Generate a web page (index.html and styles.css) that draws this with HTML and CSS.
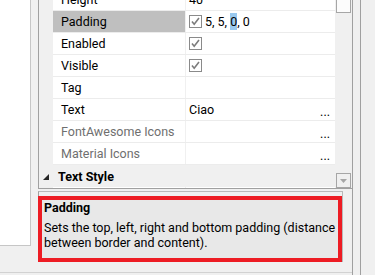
FILE: index.html
```html
<!DOCTYPE html>
<html lang="en">
<head>
    <meta charset="UTF-8">
    <title>Properties - Padding</title>
    <link rel="stylesheet" href="styles.css">
</head>
<body>
    <div class="main">
        <div class="content">
            <div class="side-panel"></div>
            <div class="props">
                <div class="grid">
                    <div class="margin-col"></div>
                    <div class="rows">
                        <div class="row"><div class="name">Height</div><div class="value">40</div></div>
                        <div class="row selected"><div class="name">Padding</div><div class="value"><svg class="check" width="13" height="13" viewBox="0 0 13 13"><rect x="0.5" y="0.5" width="12" height="12" fill="#fff" stroke="#8a8a8a"/><path d="M3 6.5 L5.2 9.2 L10 3" fill="none" stroke="#7c7c7c" stroke-width="1.6"/></svg><span>5, 5, <span class="hl">0</span>, 0</span></div></div>
                        <div class="row"><div class="name">Enabled</div><div class="value"><svg class="check" width="13" height="13" viewBox="0 0 13 13"><rect x="0.5" y="0.5" width="12" height="12" fill="#fff" stroke="#8a8a8a"/><path d="M3 6.5 L5.2 9.2 L10 3" fill="none" stroke="#7c7c7c" stroke-width="1.6"/></svg></div></div>
                        <div class="row"><div class="name">Visible</div><div class="value"><svg class="check" width="13" height="13" viewBox="0 0 13 13"><rect x="0.5" y="0.5" width="12" height="12" fill="#fff" stroke="#8a8a8a"/><path d="M3 6.5 L5.2 9.2 L10 3" fill="none" stroke="#7c7c7c" stroke-width="1.6"/></svg></div></div>
                        <div class="row"><div class="name">Tag</div><div class="value"></div></div>
                        <div class="row"><div class="name">Text</div><div class="value">Ciao<span class="dots">...</span></div></div>
                        <div class="row"><div class="name muted">FontAwesome Icons</div><div class="value"><span class="dots">...</span></div></div>
                        <div class="row"><div class="name muted">Material Icons</div><div class="value"><span class="dots">...</span></div></div>
                        <div class="category">
                            <svg class="expander" width="6" height="6" viewBox="0 0 6 6"><polygon points="6,0 6,6 0,6" fill="#262626"/></svg>
                            <span>Text Style</span>
                        </div>
                        <div class="row"><div class="name"></div><div class="value"></div></div>
                    </div>
                    <div class="scrollbar">
                        <div class="thumb"></div>
                        <div class="track"></div>
                        <div class="arrow-btn"><svg width="7" height="4" viewBox="0 0 7 4"><polygon points="0,0 7,0 3.5,4" fill="#a6a6a6"/></svg></div>
                    </div>
                </div>
                <div class="desc">
                    <div class="desc-box">
                        <div class="desc-title">Padding</div>
                        <p class="desc-text">Sets the top, left, right and bottom padding (distance between border and content).</p>
                    </div>
                </div>
            </div>
        </div>
        <div class="bottom-bar"></div>
    </div>
    <div class="edge"></div>
</body>
</html>
```

FILE: styles.css
```css
body {
    margin: 0;
    width: 375px;
    height: 275px;
    overflow: hidden;
    display: flex;
    background: #f0f0f0;
    font-family: Roboto, "Open Sans", sans-serif;
    font-size: 12.5px;
    color: #000;
}
.main {
    width: 352px;
    display: flex;
    flex-direction: column;
}
.content {
    height: 272px;
    display: flex;
    gap: 7px;
}
.side-panel {
    width: 30px;
    height: 245px;
    background: #fff;
    border-right: 1px solid #c6c6c6;
    border-bottom: 1px solid #c6c6c6;
}
.props {
    width: 314px;
    display: flex;
    flex-direction: column;
}
.grid {
    height: 188px;
    display: flex;
    border-left: 1px solid #a0a0a0;
    border-bottom: 1px solid #a0a0a0;
    overflow: hidden;
}
.margin-col {
    width: 14px;
    background: #f0f0f0;
}
.rows {
    width: 282px;
    margin-top: -11px;
    background: #fff;
}
.row {
    height: 21px;
    display: flex;
    border-bottom: 1px solid #ececec;
    line-height: 21px;
}
.name {
    width: 124px;
    padding-left: 8px;
    border-right: 1px solid #f0f0f0;
    white-space: nowrap;
}
.row.selected .name {
    background: #bfbfbf;
}
.name.muted {
    color: #6f6f6f;
}
.value {
    flex: 1;
    display: flex;
    align-items: center;
    padding-left: 3px;
    white-space: pre;
}
.check {
    margin-right: 3px;
}
.hl {
    background: #99c9ef;
    padding: 1px 0;
}
.dots {
    margin-left: auto;
    margin-right: 5px;
    align-self: flex-end;
    line-height: 17px;
}
.category {
    height: 22px;
    margin-left: -14px;
    padding-left: 4px;
    display: flex;
    align-items: center;
    gap: 9px;
    background: #f0f0f0;
    font-weight: bold;
}
.expander {
    margin-top: 2px;
}
.scrollbar {
    width: 17px;
    display: flex;
    flex-direction: column;
    background: #f0f0f0;
}
.thumb {
    height: 12px;
    margin: 0 1px;
    background: #fcfcfc;
    border: 1px solid #a6a6a6;
    border-top: none;
}
.track {
    flex: 1;
}
.arrow-btn {
    height: 13px;
    margin: 0 1px;
    border: 1px solid #a6a6a6;
    display: flex;
    align-items: center;
    justify-content: center;
}
.desc {
    width: 305px;
    height: 71px;
    margin-top: 2px;
    padding-top: 4px;
    box-sizing: border-box;
    border: 1px solid #b9b9b9;
    border-left-color: #a0a0a0;
}
.desc-box {
    height: 66px;
    box-sizing: border-box;
    border: 4px solid #ed1c24;
    background: #e8e8e8;
    padding-left: 2px;
    margin-left: -1px;
}
.desc-title {
    font-weight: bold;
    line-height: 16px;
}
.desc-text {
    margin: 4px 0 0;
    line-height: 15px;
}
.bottom-bar {
    flex: 1;
    border-top: 1px solid #d2d2d2;
}
.edge {
    flex: 1;
    border-left: 1px solid #a0a0a0;
}
.edge::before {
    content: "";
    display: block;
    margin-left: 7px;
    width: 1px;
    height: 100%;
    background: #a0a0a0;
}
```
